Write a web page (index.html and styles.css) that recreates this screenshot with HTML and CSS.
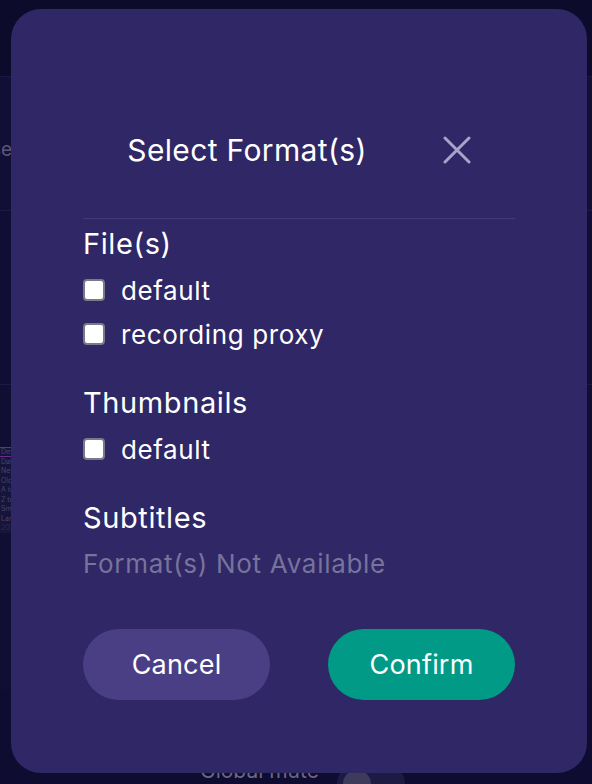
FILE: index.html
```html
<!DOCTYPE html>
<html lang="en">
<head>
<meta charset="utf-8">
<title>Select Format(s)</title>
<link rel="stylesheet" href="styles.css">
</head>
<body>
<div class="page">
  <div class="topbar"></div>
  <div class="band band-browse"><div class="browse-clip"><span class="browse-word">Browse</span></div></div>
  <div class="band band-mid"></div>
  <div class="band band-list">
    <ul class="sort-menu">
      <li class="active">Default</li>
      <li>Date</li>
      <li>Newest</li>
      <li>Oldest</li>
      <li>A to Z</li>
      <li>Z to A</li>
      <li>Smallest</li>
      <li>Largest</li>
      <li class="dim">2023</li>
    </ul>
  </div>
  <div class="footer">
    <span class="mute-label">Global mute</span>
    <span class="toggle"><span class="knob"></span></span>
  </div>
</div>

<div class="modal" role="dialog" aria-labelledby="modal-title">
  <div class="modal-header">
    <h2 id="modal-title" class="modal-title">Select Format(s)</h2>
    <button class="close-btn" aria-label="Close">
      <svg width="28" height="28" viewBox="0 0 28 28" aria-hidden="true">
        <path d="M2 2 L26 26 M26 2 L2 26" stroke="#a9a3cb" stroke-width="3" stroke-linecap="round" fill="none"/>
      </svg>
    </button>
  </div>
  <div class="divider"></div>

  <section class="group">
    <h3 class="group-title">File(s)</h3>
    <label class="option"><input type="checkbox" class="check"><span>default</span></label>
    <label class="option"><input type="checkbox" class="check"><span>recording proxy</span></label>
  </section>

  <section class="group">
    <h3 class="group-title">Thumbnails</h3>
    <label class="option"><input type="checkbox" class="check"><span>default</span></label>
  </section>

  <section class="group">
    <h3 class="group-title">Subtitles</h3>
    <p class="unavailable">Format(s) Not Available</p>
  </section>

  <div class="actions">
    <button class="btn btn-cancel">Cancel</button>
    <button class="btn btn-confirm">Confirm</button>
  </div>
</div>
</body>
</html>
```

FILE: styles.css
```css
* { box-sizing: border-box; }

html, body {
  margin: 0;
  padding: 0;
  width: 592px;
  height: 784px;
  overflow: hidden;
  background: #100d33;
  font-family: "Inter", "Roboto", "Liberation Sans", sans-serif;
}

/* ---------- backdrop page ---------- */
.page {
  display: flex;
  flex-direction: column;
  height: 784px;
}

.topbar {
  height: 77px;
  background: #0d0b2b;
  border-bottom: 1px solid #1a1742;
}

.band { overflow: hidden; }

.band-browse {
  height: 134px;
  background: #120f37;
  border-bottom: 1px solid #1c1946;
  display: flex;
  align-items: center;
  padding-top: 12px;
}

.browse-clip {
  width: 12px;
  display: flex;
  justify-content: flex-end;
  white-space: nowrap;
}

.browse-word {
  font-size: 19px;
  color: #5b5776;
}

.band-mid {
  height: 174px;
  background: #110e35;
  border-bottom: 1px solid #1c1946;
}

.band-list {
  height: 304px;
  background: #110e33;
  padding-top: 62px;
}

.sort-menu {
  list-style: none;
  margin: 0;
  padding: 0;
  width: 120px;
  background: #17143c;
  font-size: 7px;
  color: #48446a;
}

.sort-menu li {
  height: 9.5px;
  line-height: 9.5px;
  padding-left: 1px;
  overflow: hidden;
}

.sort-menu li.active {
  box-shadow: inset 0 1px 0 #6b2c8f, inset 0 -1px 0 #6b2c8f;
}

.sort-menu li.dim { color: #2c2850; }

.footer {
  flex: 1;
  background: #0f0c31;
  display: flex;
  align-items: flex-end;
  gap: 18px;
  padding-left: 200px;
}

.mute-label {
  font-size: 21px;
  color: #6a6780;
  line-height: 1;
  margin-bottom: 3px;
}

.toggle {
  width: 68px;
  height: 40px;
  border-radius: 20px;
  background: #1d1a44;
  margin-bottom: -20px;
  display: flex;
  align-items: center;
  padding-left: 6px;
}

.knob {
  width: 28px;
  height: 28px;
  border-radius: 50%;
  background: #3d3a5c;
}

/* ---------- modal ---------- */
.modal {
  position: fixed;
  top: 9px;
  left: 11px;
  width: 576px;
  height: 764px;
  background: #2f2766;
  border-radius: 30px;
  padding: 121px 72px 0 72px;
  display: flex;
  flex-direction: column;
  color: #ffffff;
}

.modal-header {
  display: flex;
  justify-content: center;
  align-items: center;
  gap: 76px;
  height: 40px;
}

.modal-title {
  margin: 0;
  font-size: 30px;
  font-weight: 400;
  line-height: 40px;
  letter-spacing: 0.35px;
  white-space: nowrap;
}

.close-btn {
  border: 0;
  padding: 0;
  background: transparent;
  width: 28px;
  height: 28px;
  display: flex;
  cursor: pointer;
  flex: none;
}

.divider {
  height: 1px;
  margin-top: 48px;
  background: rgba(255, 255, 255, 0.09);
}

.group {
  display: flex;
  flex-direction: column;
}

.group + .group { margin-top: 29px; }

.group-title {
  margin: 7px 0 6px 0;
  font-size: 29px;
  font-weight: 400;
  line-height: 36px;
  letter-spacing: 0.6px;
}

.group + .group .group-title { margin-top: 0; }

.option {
  display: flex;
  align-items: center;
  gap: 16px;
  height: 44px;
  font-size: 26px;
  letter-spacing: 0.6px;
}

.check {
  appearance: none;
  -webkit-appearance: none;
  margin: 0;
  width: 22px;
  height: 22px;
  border-radius: 4px;
  background: #ffffff;
  border: 2px solid #7a7a86;
  flex: none;
}

.unavailable {
  margin: 0;
  height: 44px;
  line-height: 44px;
  font-size: 26px;
  letter-spacing: 0.7px;
  color: #78739a;
}

.actions {
  display: flex;
  justify-content: space-between;
  margin-top: 43px;
}

.btn {
  width: 187px;
  height: 71px;
  border: 0;
  border-radius: 36px;
  color: #ffffff;
  font-family: inherit;
  font-size: 27px;
  letter-spacing: 0.2px;
  cursor: pointer;
}

.btn-cancel { background: #4a3f85; }
.btn-confirm { background: #009a86; }
```
